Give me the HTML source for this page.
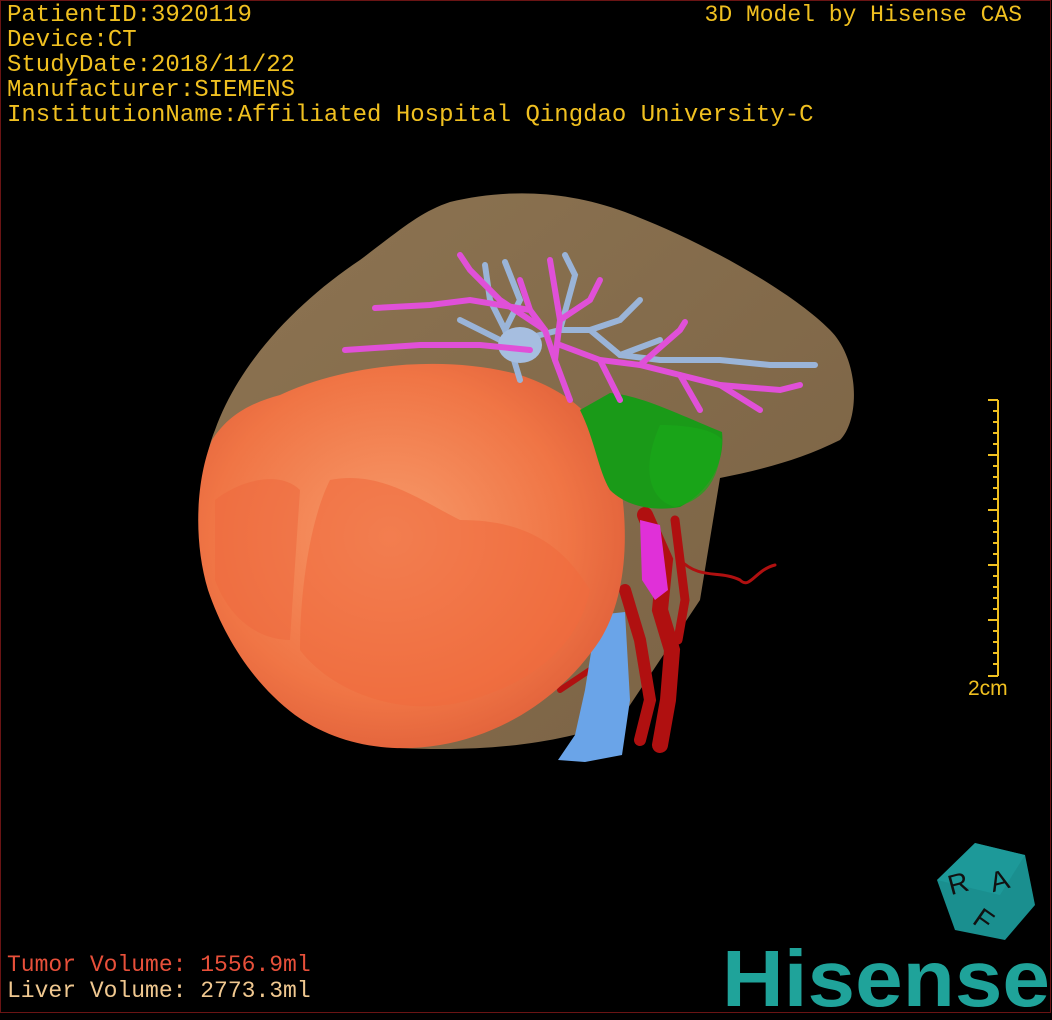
<!DOCTYPE html>
<html><head><meta charset="utf-8"><style>
html,body{margin:0;padding:0;background:#000;}
body{width:1052px;height:1020px;position:relative;overflow:hidden;}
.frame{position:absolute;left:0;top:0;width:1049px;height:1011px;border:1.5px solid #6a1414;}
.t{position:absolute;font-family:"Liberation Mono",monospace;font-size:24px;color:#f0c020;white-space:pre;line-height:25px;}
</style></head><body>
<svg width="1052" height="1020" style="position:absolute;left:0;top:0">
<defs>
<radialGradient id="tg" cx="0.45" cy="0.45" r="0.6"><stop offset="0" stop-color="#f79a6a"/><stop offset="0.7" stop-color="#f07545"/><stop offset="1" stop-color="#e0603a"/></radialGradient>
<linearGradient id="lg" x1="0" y1="0" x2="1" y2="1"><stop offset="0" stop-color="#8d7452"/><stop offset="1" stop-color="#7a6244"/></linearGradient>
</defs>
<path d="M450,202 C500,190 560,188 625,212 C700,240 790,290 830,330 C860,360 860,420 840,440 C800,460 760,470 720,478 L700,600 L620,720 C560,745 480,752 400,748 C330,740 260,700 220,620 C195,560 195,480 215,430 C240,360 300,300 360,260 C400,230 420,212 450,202 Z" fill="url(#lg)"/>
<g fill="none" stroke="#b01010" stroke-linecap="round">
<path d="M645,515 L665,560 L660,610 L672,650 L668,700 L660,745" stroke-width="16"/>
<path d="M675,520 L680,560 L685,600 L678,640" stroke-width="9"/>
<path d="M625,590 L640,640 L650,700 L640,740" stroke-width="12"/>
<path d="M680,560 C700,580 720,570 740,580 C750,590 755,570 775,565" stroke-width="3"/>
<path d="M560,690 L590,670 L615,690" stroke-width="6"/>
</g>
<path d="M640,520 L660,525 L668,590 L655,600 L642,580 Z" fill="#e030d8"/>
<path d="M597,615 L625,612 L630,700 L622,755 L585,762 L558,760 L575,735 L585,690 Z" fill="#6aa4e8"/>
<path d="M280,395 C350,362 450,355 520,375 C580,395 610,430 620,480 C630,540 625,600 600,640 C560,700 500,735 440,745 C380,755 330,740 295,715 C255,685 225,640 208,590 C193,540 196,480 212,440 C230,412 255,402 280,395 Z" fill="url(#tg)"/>
<path d="M330,480 C380,470 420,500 460,520 C520,520 560,540 590,590 C580,640 540,680 470,700 C400,720 330,690 300,650 C300,590 310,520 330,480 Z" fill="#f06a3e" opacity="0.6"/>
<path d="M215,500 C240,480 280,470 300,490 L290,640 C260,640 230,620 215,580 Z" fill="#ef6a40" opacity="0.6"/>
<path d="M580,410 L610,393 C640,395 680,415 722,432 C725,460 712,490 680,507 C650,512 625,505 610,490 C598,470 595,440 580,410 Z" fill="#1a9a18"/>
<path d="M660,425 C690,425 715,430 722,440 C720,480 705,500 675,507 C650,500 640,470 660,425 Z" fill="#1aa818" opacity="0.7"/>
<g stroke="#9ab4d8" stroke-width="6" fill="none" stroke-linecap="round">
<path d="M520,380 L505,330 L490,300 L485,265"/>
<path d="M505,330 L520,300 L505,262"/>
<path d="M520,340 L560,330 L590,330 L620,320 L640,300"/>
<path d="M560,330 L575,275 L565,255"/>
<path d="M590,330 L620,355 L660,360 L720,360 L770,365 L815,365"/>
<path d="M460,320 L500,340"/>
<path d="M620,355 L660,340"/>
</g>
<ellipse cx="520" cy="345" rx="22" ry="18" fill="#a6bee0"/>
<g stroke="#e050d8" stroke-width="6" fill="none" stroke-linecap="round">
<path d="M570,400 L555,360 L545,330 L530,310 L470,300 L430,305 L375,308"/>
<path d="M555,360 L560,320 L555,290 L550,260"/>
<path d="M560,320 L590,300 L600,280"/>
<path d="M545,330 L500,300 L470,270 L460,255"/>
<path d="M530,310 L520,280"/>
<path d="M560,345 L600,360 L640,365 L680,375 L720,385 L780,390 L800,385"/>
<path d="M640,365 L680,330 L685,322"/>
<path d="M680,375 L700,410"/>
<path d="M530,350 L480,345 L420,345 L345,350"/>
<path d="M720,385 L760,410"/>
<path d="M600,360 L620,400"/>
</g>
<g stroke="#f0c020" stroke-width="2">
<line x1="998" y1="400" x2="998" y2="676"/>
<line x1="988" y1="400" x2="998" y2="400"/><line x1="988" y1="455" x2="998" y2="455"/><line x1="988" y1="510" x2="998" y2="510"/><line x1="988" y1="565" x2="998" y2="565"/><line x1="988" y1="620" x2="998" y2="620"/><line x1="988" y1="676" x2="998" y2="676"/>
<line x1="993" y1="411" x2="998" y2="411"/><line x1="993" y1="422" x2="998" y2="422"/><line x1="993" y1="433" x2="998" y2="433"/><line x1="993" y1="444" x2="998" y2="444"/>
<line x1="993" y1="466" x2="998" y2="466"/><line x1="993" y1="477" x2="998" y2="477"/><line x1="993" y1="488" x2="998" y2="488"/><line x1="993" y1="499" x2="998" y2="499"/>
<line x1="993" y1="521" x2="998" y2="521"/><line x1="993" y1="532" x2="998" y2="532"/><line x1="993" y1="543" x2="998" y2="543"/><line x1="993" y1="554" x2="998" y2="554"/>
<line x1="993" y1="576" x2="998" y2="576"/><line x1="993" y1="587" x2="998" y2="587"/><line x1="993" y1="598" x2="998" y2="598"/><line x1="993" y1="609" x2="998" y2="609"/>
<line x1="993" y1="631" x2="998" y2="631"/><line x1="993" y1="642" x2="998" y2="642"/><line x1="993" y1="653" x2="998" y2="653"/><line x1="993" y1="664" x2="998" y2="664"/>
</g>
<text x="968" y="695" font-family="Liberation Sans,sans-serif" font-size="21" fill="#f0c020">2cm</text>
<polygon points="975,843 1025,855 1035,905 1005,940 955,930 937,880" fill="#1a8f8f"/>
<polygon points="975,843 1025,855 1000,895 937,880" fill="#20a0a0" opacity="0.6"/>
<g font-family="Liberation Sans,sans-serif" font-size="28" fill="#111">
<text x="948" y="893" transform="rotate(-15 958 883)">R</text>
<text x="990" y="890" transform="rotate(-15 1000 880)">A</text>
<text x="975" y="930" transform="rotate(35 985 920)">F</text>
</g>
<text x="722" y="1006" font-family="Liberation Sans,sans-serif" font-weight="bold" font-size="80" fill="#1fa39a" textLength="328" lengthAdjust="spacingAndGlyphs">Hisense</text>
</svg>
<div class="frame"></div>
<div class="t" style="left:7px;top:3px">PatientID:3920119
Device:CT
StudyDate:2018/11/22
Manufacturer:SIEMENS
InstitutionName:Affiliated Hospital Qingdao University-C</div>
<div class="t" style="right:30px;top:3px;font-size:23px">3D Model by Hisense CAS</div>
<div class="t" style="left:7px;top:953px;font-size:23px;color:#e8503a">Tumor Volume: 1556.9ml</div>
<div class="t" style="left:7px;top:979px;font-size:23px;color:#f0c890">Liver Volume: 2773.3ml</div>
</body></html>
